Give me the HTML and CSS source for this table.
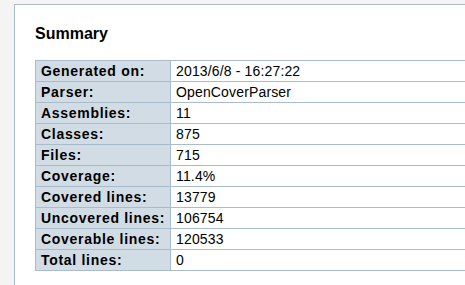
FILE: index.html
```html
<!DOCTYPE html>
<html>
<head>
<meta charset="utf-8">
<title>Summary</title>
<link rel="stylesheet" href="styles.css">
</head>
<body>
<div class="container">
  <h1 class="title">Summary</h1>
  <table class="overview">
    <tr><th>Generated on:</th><td>2013/6/8 - 16:27:22</td></tr>
    <tr><th>Parser:</th><td>OpenCoverParser</td></tr>
    <tr><th>Assemblies:</th><td>11</td></tr>
    <tr><th>Classes:</th><td>875</td></tr>
    <tr><th>Files:</th><td>715</td></tr>
    <tr><th>Coverage:</th><td>11.4%</td></tr>
    <tr><th>Covered lines:</th><td>13779</td></tr>
    <tr><th>Uncovered lines:</th><td>106754</td></tr>
    <tr><th>Coverable lines:</th><td>120533</td></tr>
    <tr><th>Total lines:</th><td>0</td></tr>
  </table>
</div>
</body>
</html>
```
FILE: styles.css
```css
html, body {
  margin: 0;
  padding: 0;
  overflow: hidden;
}
body {
  background: #f4f4f4;
  font-family: "Liberation Sans", Arial, sans-serif;
  font-size: 14px;
  color: #000;
}
.container {
  margin: 4px 0 0 14px;
  width: 960px;
  min-height: 400px;
  border: 1px solid #a8bccb;
  background: #fff;
  padding: 19px 20px 20px 20px;
}
.title {
  margin: 0 0 16px 0;
  font-size: 16px;
  line-height: 20px;
  font-weight: bold;
}
.overview {
  border-collapse: collapse;
  width: 100%;
  border: 1px solid #a8bccb;
}
.overview th,
.overview td {
  border: 1px solid #a8bccb;
  padding: 2px 5px;
  line-height: 16px;
  text-align: left;
  vertical-align: middle;
}
.overview th {
  width: 124px;
  background: #d2dce4;
  font-weight: bold;
  letter-spacing: 0.7px;
  white-space: nowrap;
}
.overview td {
  background: #fff;
  letter-spacing: 0.15px;
}
```
